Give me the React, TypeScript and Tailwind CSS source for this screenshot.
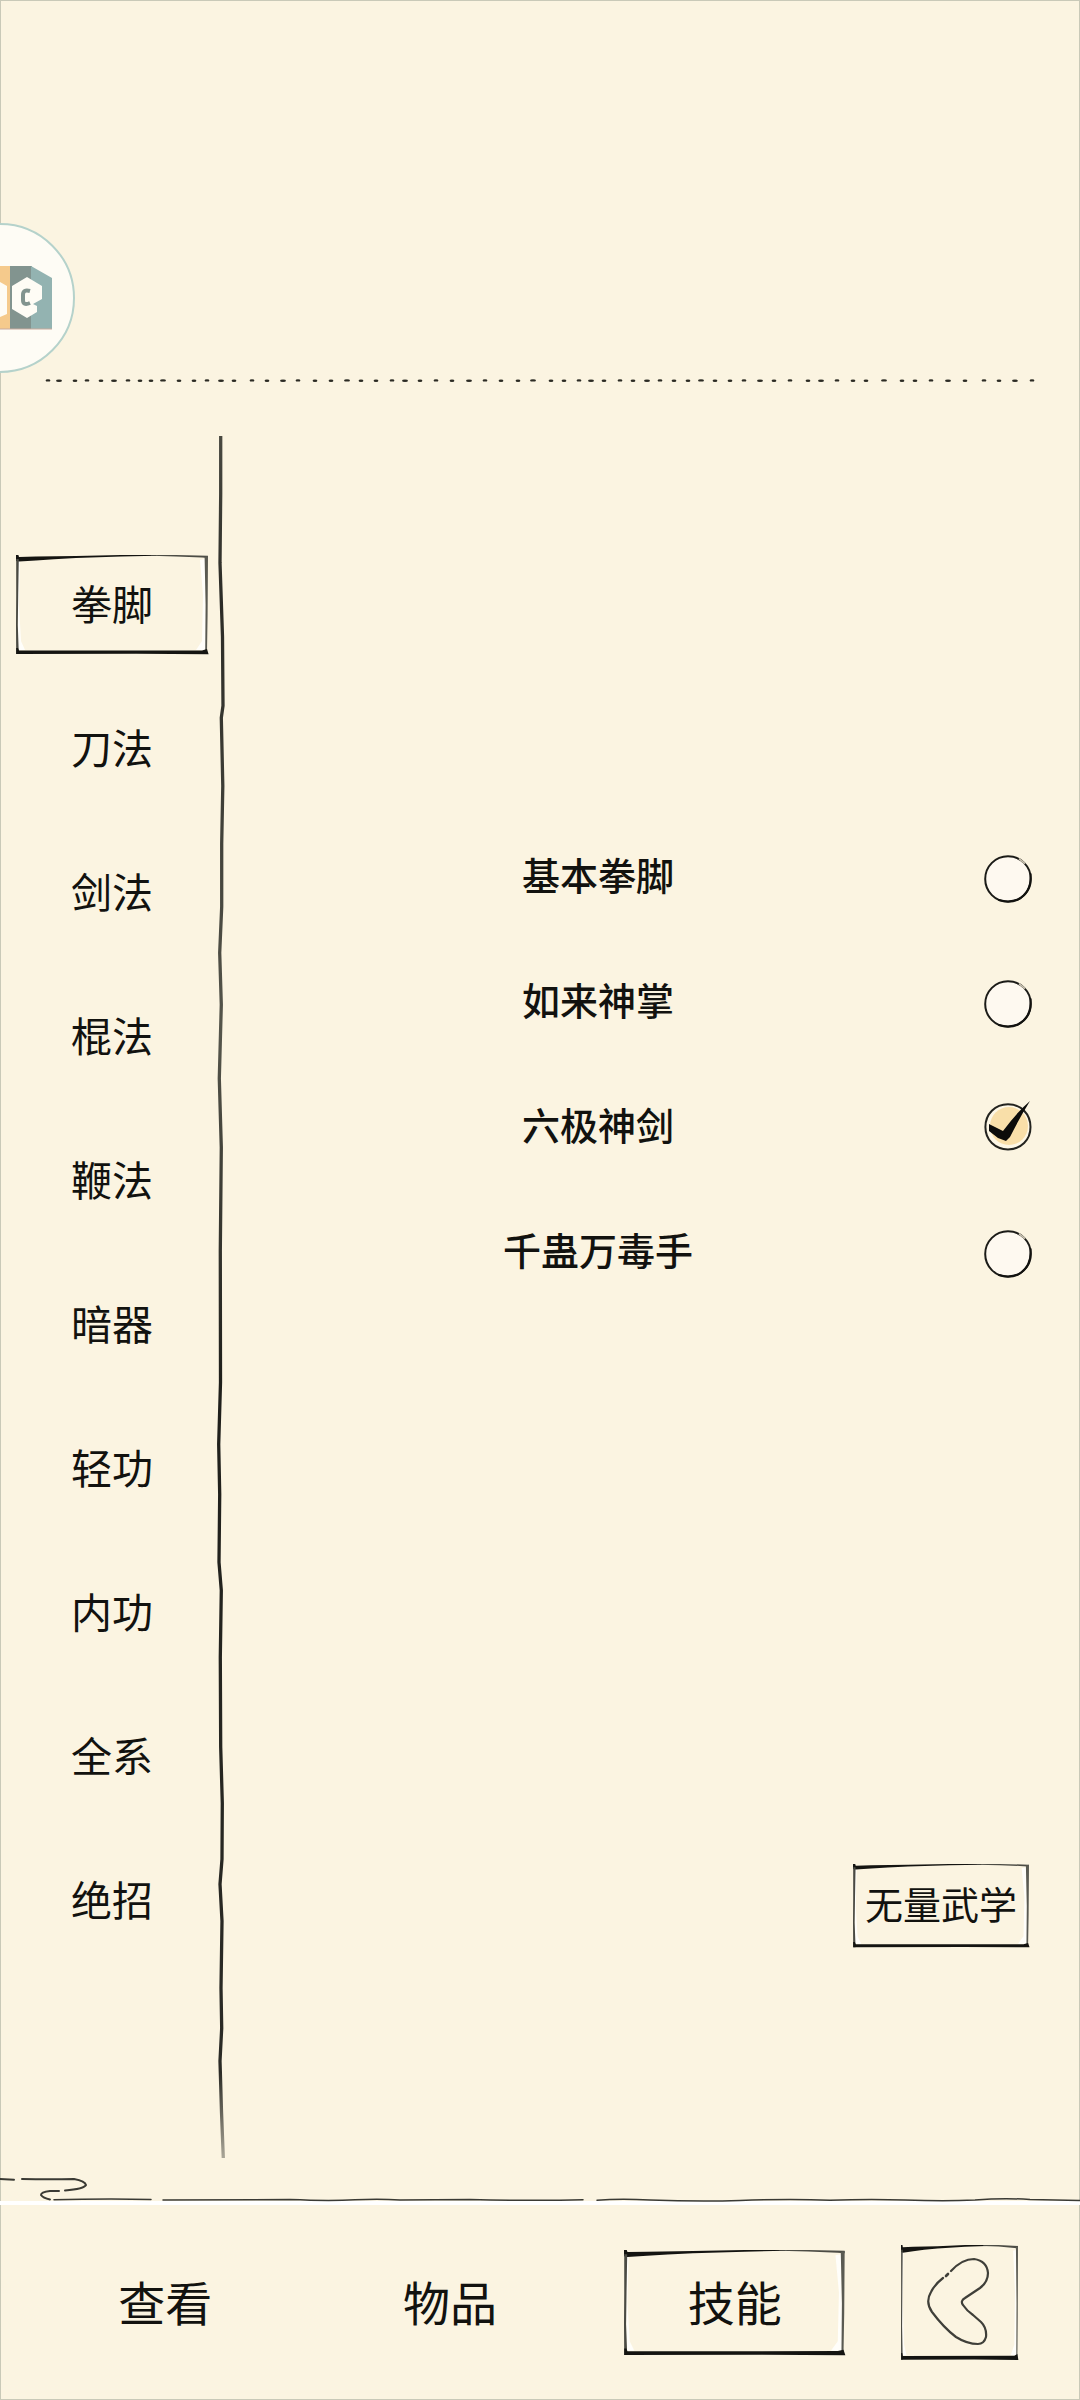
import React, { useState } from 'react';

const categories = ['拳脚', '刀法', '剑法', '棍法', '鞭法', '暗器', '轻功', '内功', '全系', '绝招'];

const skills = ['基本拳脚', '如来神掌', '六极神剑', '千蛊万毒手'];

const menuItems = ['查看', '物品', '技能'];

// x positions of the ink dots in the header rule
const ruleDots = [
  48, 59, 75, 87, 101, 114, 128, 140, 151, 163, 179, 194, 207, 221, 234, 252, 267, 283, 298, 315, 331,
  347, 361, 376, 392, 405, 420, 436, 452, 469, 485, 501, 518, 533, 551, 564, 579, 591, 604, 620, 633,
  647, 660, 674, 688, 701, 715, 730, 744, 760, 774, 790, 808, 821, 837, 853, 866, 884, 902, 915, 931,
  948, 965, 984, 999, 1015, 1032
];

function SketchFrame() {
  return (
    <svg
      className="absolute inset-0 h-full w-full overflow-visible"
      viewBox="0 0 192 100"
      preserveAspectRatio="none"
      aria-hidden="true"
    >
      {/* paper highlights along the inside */}
      <path d="M2 5 L4 5 L3 50 L5 86 L9 95 L2 95 Z" fill="#fffefa" />
      <path d="M189 4 L184 5 L187 40 L186 86 L180 95 L190 95 Z" fill="#fffefa" />
      {/* ink */}
      <path d="M0 0 L2.4 0 L3 2 L20 1.6 L60 1 L105 0 L140 0 L140 .8 L105 1.6 L60 3 L38 4.2 L20 5.4 L3 6.6 L0 6 Z" fill="#141411" />
      <path d="M135 0 L160 0 L192 .8 L192 3 L186 2.6 L160 1.4 L135 .8 Z" fill="#4c4c45" />
      <path d="M.2 4 L2.8 4 L2.2 40 L1.8 70 L2.8 99 L.2 99 L0 70 L.2 40 Z" fill="#4a4a43" />
      <path d="M188.6 2 L192 1 L191.6 60 L191 97 L189.2 97 L189.6 50 Z" fill="#5a5a52" />
      <path d="M.2 93 L2 93 L3 95.6 L186 95.4 L191 94 L192.6 99.2 L120 98.8 L.2 99 Z" fill="#141411" />
    </svg>
  );
}

function Logo() {
  return (
    <svg className="block h-[150px] w-[76px]" viewBox="0 0 76 150" role="img" aria-label="Logo">
      <circle cx="0" cy="75" r="74" fill="#fefcf5" stroke="#b5d2cb" strokeWidth="2" />
      <rect x="0" y="43" width="10" height="63" fill="#f5ca8c" />
      <path d="M0 59 L7 63 L7 91 L0 94 Z" fill="#fefcf5" />
      <rect x="10" y="43" width="22" height="63" fill="#82948f" />
      <path d="M31 43 L52 55 L52 106 L31 106 Z" fill="#93b3b1" />
      <path d="M0 106 H52" stroke="#c9aa9d" strokeWidth="1" />
      <path d="M27 54 L42 63 L42 76 L33 81 L37 83 L37 89 L27 95 L12 86 L12 63 Z" fill="#fefcf5" />
      <path
        d="M30 68 Q23 66 23 72 V77 Q23 83 30 80"
        fill="none"
        stroke="#82948f"
        strokeWidth="4"
      />
    </svg>
  );
}

function DottedRule() {
  return (
    <svg className="block h-4 w-full" viewBox="0 0 1080 16" preserveAspectRatio="none" aria-hidden="true">
      {ruleDots.map((x, i) => (
        <ellipse key={x} cx={x} cy={i % 3 === 0 ? 7.4 : 7.8} rx={i % 4 === 1 ? 3 : 2.4} ry="1.2" fill="#2c2b24" />
      ))}
    </svg>
  );
}

function Divider() {
  return (
    <div className="relative mb-3 w-[14px] shrink-0">
      <svg className="absolute inset-0 h-full w-full" viewBox="0 0 14 1730" preserveAspectRatio="none" aria-hidden="true">
        <defs>
          <linearGradient id="ink" gradientUnits="userSpaceOnUse" x1="0" y1="0" x2="0" y2="1730">
            <stop offset="0" stopColor="#4a4a42" />
            <stop offset="0.1" stopColor="#2b2b26" />
            <stop offset="0.35" stopColor="#55554b" />
            <stop offset="0.55" stopColor="#1f1f1b" />
            <stop offset="0.95" stopColor="#2b2b26" />
            <stop offset="1" stopColor="#a9a597" />
          </linearGradient>
        </defs>
        <path
          d="M6.7 7 L6.7 65 L6 134 L8.5 208 L9 277 L7.3 289 L8.8 357 L7.7 415 L7.7 478 L5.7 524 L7.3 576 L5.3 650 L7.3 719 L6.3 822 L6.5 954 L4.7 1016 L5.7 1066 L5 1134 L7.3 1162 L6.3 1229 L6.7 1319 L8.3 1375 L8 1431 L6 1456 L8 1493 L7 1560 L7.7 1600 L6 1633 L7.5 1684 L9.3 1730"
          fill="none"
          stroke="url(#ink)"
          strokeWidth="3.3"
          strokeLinejoin="round"
        />
      </svg>
    </div>
  );
}

function CloudRule() {
  return (
    <svg className="block h-9 w-full" viewBox="0 0 1080 36" preserveAspectRatio="none" aria-hidden="true">
      <rect x="0" y="31" width="1080" height="4" fill="#ffffff" />
      <g fill="none" stroke="#3a3a34" strokeWidth="2" strokeLinecap="round">
        <path d="M0 9 L14 9.8" />
        <path d="M22 9 Q50 9.4 74 9 Q85 11 86 15 Q84 19 65 20.4" />
        <path d="M59 21 L50 21 Q41 22 41 25 Q43 28 50 29.4" />
        <path d="M54 29.8 Q100 28.6 151 29.4" strokeWidth="1.5" />
        <path
          d="M163 30 L290 29.6 Q330 31.2 355 29.8 Q380 28.8 400 30 L470 29.4 Q530 31 583 29.8"
          strokeWidth="1.5"
        />
        <path
          d="M597 30.2 Q620 28.6 650 30 Q700 31.6 740 30.4 Q790 28.8 830 30.2 Q870 28.8 905 30 Q945 31.6 975 30 Q1005 27.6 1030 29.6 L1080 30.4"
          strokeWidth="1.5"
        />
      </g>
    </svg>
  );
}

function RadioMark({ checked }: { checked: boolean }) {
  return (
    <svg className="pointer-events-none absolute inset-0 h-full w-full overflow-visible" viewBox="0 0 48 48" aria-hidden="true">
      {checked ? (
        <>
          <circle cx="24" cy="23" r="22" fill="#fdf7e6" />
          <circle cx="25" cy="22" r="19" fill="#f9dfa9" />
          <path
            d="M24 .2 C37 .2 46.5 10 46.5 23 C46.5 36 37 45.4 24 45.4 C11 45.4 1.4 36 1.4 23 C1.4 10 11 .2 24 .2 Z"
            fill="none"
            stroke="#23231f"
            strokeWidth="2"
          />
          <path d="M5 20 L19 27 Q33 8 46 -3 Q36 13 26 33 L22 37 L14 34 L5 27 Z" fill="#0c0c0a" />
        </>
      ) : (
        <>
          <circle cx="24" cy="25" r="22.6" fill="#fef9f0" />
          <circle cx="24" cy="25" r="22.8" fill="none" stroke="#1b1b17" strokeWidth="2" />
          <path d="M46.5 20 Q48 38 34 45.5 Q25 49 15 46" fill="none" stroke="#12120f" strokeWidth="2" strokeLinecap="round" />
          <path d="M35 4.6 L41 9.6" stroke="#c9c2b0" strokeWidth="1.8" />
        </>
      )}
    </svg>
  );
}

export default function App() {
  const [category, setCategory] = useState('拳脚');
  const [skill, setSkill] = useState('六极神剑');
  const [menu, setMenu] = useState('技能');

  return (
    <div className="flex min-h-screen flex-col bg-[#fbf4e1] font-['Noto_Sans_CJK_SC',sans-serif] text-[#12120f] inset-ring inset-ring-[#c9c9b8]">
      {/* Header */}
      <header className="pt-[223px]">
        <Logo />
        <DottedRule />
      </header>

      {/* Body */}
      <div className="flex flex-1 pt-10">
        <nav className="flex w-[214px] shrink-0 flex-col gap-11 pt-[126px] pr-1.5 pl-4" aria-label="武学类别">
          {categories.map((name) => (
            <button
              key={name}
              type="button"
              onClick={() => setCategory(name)}
              className="relative flex h-[100px] w-full items-center justify-center text-[41px] leading-[48px]"
            >
              {category === name && <SketchFrame />}
              <span className="relative pb-1.5">{name}</span>
            </button>
          ))}
        </nav>

        <Divider />

        <main className="flex min-w-0 flex-1 flex-col">
          <div className="pt-[386px]" role="radiogroup" aria-label="武学">
            {skills.map((name) => (
              <label key={name} className="flex h-[125px] cursor-pointer items-center pr-12">
                <span className="flex-1 pr-4 pb-2 text-center text-[38px] leading-[48px] font-medium">{name}</span>
                <span className="relative h-12 w-12 shrink-0">
                  <input
                    type="radio"
                    name="skill"
                    value={name}
                    checked={skill === name}
                    onChange={() => setSkill(name)}
                    className="block h-12 w-12 appearance-none rounded-full"
                  />
                  <RadioMark checked={skill === name} />
                </span>
              </label>
            ))}
          </div>
          <button
            type="button"
            className="relative mt-auto mr-[51px] mb-[222px] flex h-[84px] w-[176px] items-center justify-center self-end text-[38px] leading-[48px] whitespace-nowrap"
          >
            <SketchFrame />
            <span className="relative pb-1.5">无量武学</span>
          </button>
        </main>
      </div>

      {/* Bottom menu */}
      <footer>
        <CloudRule />
        <div className="flex h-[194px] items-center gap-14 pr-[62px] pl-[55px]">
          <nav className="flex flex-1 gap-16" aria-label="菜单">
            {menuItems.map((name) => (
              <button
                key={name}
                type="button"
                onClick={() => setMenu(name)}
                className="relative flex h-[106px] flex-1 items-center justify-center text-[47px] leading-[56px]"
              >
                {menu === name && <SketchFrame />}
                <span className="relative pb-1">{name}</span>
              </button>
            ))}
          </nav>
          <button type="button" aria-label="返回" className="relative h-[116px] w-[117px]">
            <SketchFrame />
            <svg className="relative block h-full w-full" viewBox="0 0 117 116" aria-hidden="true">
              <g fill="none" stroke="#3f3f39" strokeWidth="2.2" strokeLinecap="round" strokeLinejoin="round">
                <path d="M50 26 Q61 14 73 14 Q86 16 87 28 Q87 37 79 43 L64 53 Q59 56 62 60 Q66 66 72 70 L80 77 Q86 83 85 92 Q83 99 77 99 Q66 99 55 92 Q43 83 31 67 Q24 57 30 47 Q34 39 42 33" />
                <path d="M45 31 L47 29" strokeWidth="2.6" />
              </g>
            </svg>
          </button>
        </div>
      </footer>
    </div>
  );
}
